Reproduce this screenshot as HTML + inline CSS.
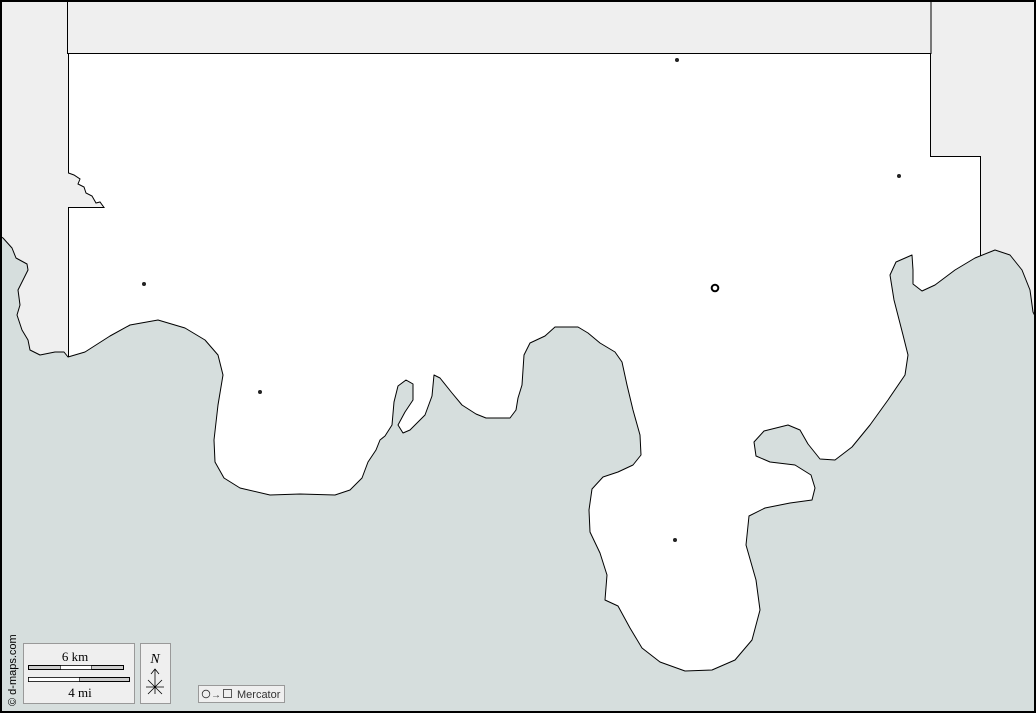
<!DOCTYPE html>
<html><head><meta charset="utf-8"><style>
html,body{margin:0;padding:0;width:1036px;height:713px;overflow:hidden;background:#efefef}
svg{display:block}
</style></head><body>
<svg width="1036" height="713" viewBox="0 0 1036 713" xmlns="http://www.w3.org/2000/svg">
<rect x="0" y="0" width="1036" height="713" fill="#efefef"/>
<rect x="67.5" y="0" width="863.5" height="53.5" fill="#efefef" stroke="#000" stroke-width="1"/>
<path d="M68.5,53.5 L930.5,53.5 L930.5,156.5 L980.5,156.5 L980.5,713 L68.5,713 L68.5,207.5 L104,207.5 L100,202 L96,203 L92,196 L86,193 L84,187 L78,184 L80,179 L74,175 L68.5,173 Z" fill="#fff" stroke="#000" stroke-width="1"/>
<path id="coast" d="M0,236 L3,238 L12,248 L16,258 L27,264 L28,270 L24,278 L18,290 L20,305 L17,315 L22,330 L28,340 L30,350 L40,355 L55,352 L64,352 L68,357 L85,352 L110,336 L130,325 L158,320 L185,328 L205,340 L218,355 L223,375 L218,405 L214,440 L215,462 L224,478 L240,488 L270,495 L300,494 L335,495 L350,490 L362,478 L368,462 L376,450 L380,440 L385,436 L392,425 L394,402 L398,386 L406,380 L413,384 L413,400 L405,412 L398,425 L403,433 L410,430 L425,415 L432,396 L434,375 L440,378 L452,393 L462,405 L476,414 L486,418 L510,418 L516,410 L518,398 L522,385 L524,355 L530,343 L545,336 L555,327 L578,327 L588,333 L600,343 L615,352 L622,362 L627,385 L633,410 L640,435 L641,455 L633,465 L618,472 L603,477 L592,489 L589,510 L590,532 L600,553 L607,575 L605,600 L618,606 L630,628 L642,648 L660,662 L685,671 L712,670 L735,660 L752,640 L760,610 L756,580 L746,545 L749,516 L765,508 L790,503 L812,500 L815,488 L811,475 L795,465 L770,462 L756,456 L754,442 L764,431 L788,425 L800,430 L808,444 L820,459 L835,460 L852,447 L870,425 L888,400 L905,375 L908,355 L903,335 L894,300 L890,275 L896,262 L912,255 L913,270 L913,284 L922,291 L935,285 L955,270 L975,258 L995,250 L1010,255 L1022,270 L1030,290 L1033,312 L1036,318 L1036,713 L0,713 Z" fill="#d6dedd" stroke="none"/>
<path d="M0,236 L3,238 L12,248 L16,258 L27,264 L28,270 L24,278 L18,290 L20,305 L17,315 L22,330 L28,340 L30,350 L40,355 L55,352 L64,352 L68,357 L85,352 L110,336 L130,325 L158,320 L185,328 L205,340 L218,355 L223,375 L218,405 L214,440 L215,462 L224,478 L240,488 L270,495 L300,494 L335,495 L350,490 L362,478 L368,462 L376,450 L380,440 L385,436 L392,425 L394,402 L398,386 L406,380 L413,384 L413,400 L405,412 L398,425 L403,433 L410,430 L425,415 L432,396 L434,375 L440,378 L452,393 L462,405 L476,414 L486,418 L510,418 L516,410 L518,398 L522,385 L524,355 L530,343 L545,336 L555,327 L578,327 L588,333 L600,343 L615,352 L622,362 L627,385 L633,410 L640,435 L641,455 L633,465 L618,472 L603,477 L592,489 L589,510 L590,532 L600,553 L607,575 L605,600 L618,606 L630,628 L642,648 L660,662 L685,671 L712,670 L735,660 L752,640 L760,610 L756,580 L746,545 L749,516 L765,508 L790,503 L812,500 L815,488 L811,475 L795,465 L770,462 L756,456 L754,442 L764,431 L788,425 L800,430 L808,444 L820,459 L835,460 L852,447 L870,425 L888,400 L905,375 L908,355 L903,335 L894,300 L890,275 L896,262 L912,255 L913,270 L913,284 L922,291 L935,285 L955,270 L975,258 L995,250 L1010,255 L1022,270 L1030,290 L1033,312 L1036,318" fill="none" stroke="#000" stroke-width="1" stroke-linejoin="round"/>
<g fill="#222">
<circle cx="677" cy="60" r="2"/><circle cx="899" cy="176" r="2"/><circle cx="144" cy="284" r="2"/><circle cx="260" cy="392" r="2"/><circle cx="675" cy="540" r="2"/>
</g>
<circle cx="715" cy="288" r="3.3" fill="#fff" stroke="#000" stroke-width="2"/>
<rect x="23.5" y="643.5" width="111" height="60" fill="#efefef" stroke="#999"/>
<text x="75" y="661" font-family="Liberation Serif,serif" font-size="13" text-anchor="middle" fill="#000">6 km</text>
<rect x="28.5" y="665.5" width="95" height="4" fill="#ccc" stroke="#000" stroke-width="1"/>
<rect x="60.5" y="665.5" width="31" height="4" fill="#fff" stroke="#000" stroke-width="0.6"/>
<rect x="28.5" y="677.5" width="101" height="4" fill="#ccc" stroke="#000" stroke-width="1"/>
<rect x="28.5" y="677.5" width="51" height="4" fill="#fff" stroke="#000" stroke-width="0.6"/>
<text x="80" y="697" font-family="Liberation Serif,serif" font-size="13" text-anchor="middle" fill="#000">4 mi</text>
<rect x="140.5" y="643.5" width="30" height="60" fill="#efefef" stroke="#999"/>
<text x="155" y="663" font-family="Liberation Serif,serif" font-size="14" font-style="italic" text-anchor="middle" fill="#000">N</text>
<path d="M155,694 L155,669 M151,674 L155,669 L159,674 M146,687 L164,687 M148,680 L162,694 M148,694 L162,680" stroke="#000" stroke-width="0.8" fill="none"/>
<rect x="198.5" y="685.5" width="86" height="17" fill="#efefef" stroke="#999"/>
<circle cx="206" cy="694" r="3.8" fill="none" stroke="#333" stroke-width="0.8"/>
<text x="211" y="698" font-family="Liberation Sans,sans-serif" font-size="10" fill="#333">→</text>
<rect x="223.5" y="689.5" width="8" height="8" fill="none" stroke="#333" stroke-width="0.8"/>
<text x="237" y="698" font-family="Liberation Sans,sans-serif" font-size="11" fill="#333">Mercator</text>
<text transform="translate(16,706) rotate(-90)" font-family="Liberation Sans,sans-serif" font-size="11" fill="#000">© d-maps.com</text>
<rect x="1" y="1" width="1034" height="711" fill="none" stroke="#000" stroke-width="2"/>
</svg>
</body></html>
